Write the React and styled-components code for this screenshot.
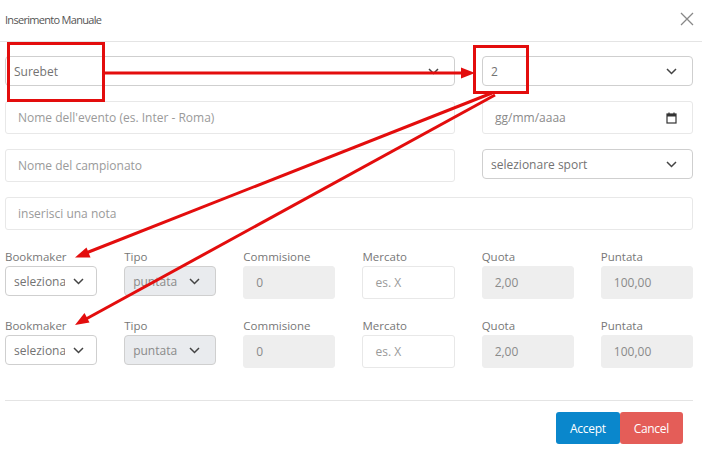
import React from 'react';
import styled, { createGlobalStyle } from 'styled-components';

const GlobalStyle = createGlobalStyle`
  html, body {
    margin: 0;
    padding: 0;
    background: #fff;
  }
  body {
    font-family: 'Open Sans', 'Noto Sans', sans-serif;
    color: #666;
  }
  * {
    box-sizing: border-box;
  }
`;

const bets = [1, 2];

const Chevron = () => (
  <svg width="11" height="7" viewBox="0 0 11 7">
    <path d="M1 1l4.5 4.5L10 1" fill="none" stroke="#444" strokeWidth="1.5" />
  </svg>
);

const CalendarIcon = () => (
  <svg width="11" height="12" viewBox="0 0 11 12">
    <rect x="1" y="2" width="9" height="9" fill="none" stroke="#333" strokeWidth="1.2" />
    <rect x="1" y="2" width="9" height="2.5" fill="#333" />
    <path d="M3 0.5v2M8 0.5v2" stroke="#333" strokeWidth="1.2" />
  </svg>
);

const CloseIcon = () => (
  <svg width="14" height="14" viewBox="0 0 14 14">
    <path d="M1 1l12 12M13 1L1 13" stroke="#888" strokeWidth="1.3" />
  </svg>
);

// red annotations drawn on top of the form
const Annotations = () => (
  <Overlay viewBox="0 0 702 455">
    <g fill="none" stroke="#e30d0d" strokeWidth="3">
      <rect x="8.5" y="43.5" width="95" height="57" />
      <rect x="474.5" y="46.5" width="53" height="46" />
      <path d="M104 73H462" />
      <path d="M492 93L86 253" />
      <path d="M495 95L86 319" />
    </g>
    <g fill="#e30d0d">
      <polygon points="475,73 461,67.5 461,78.5" />
      <polygon points="75,257.5 86.5,247.5 90.5,257.5" />
      <polygon points="75,325 84.5,313 89.5,322.5" />
    </g>
  </Overlay>
);

const App = () => {
  return (
    <>
      <GlobalStyle />
      <Modal>
        <Header>
          <Title>Inserimento Manuale</Title>
          <CloseButton>
            <CloseIcon />
          </CloseButton>
        </Header>
        <Body>
          <TopGrid>
            <Select>
              <SelectText>Surebet</SelectText>
              <Chevron />
            </Select>
            <Select>
              <SelectText>2</SelectText>
              <Chevron />
            </Select>
            <Input placeholder="Nome dell'evento (es. Inter - Roma)" />
            <DateBox>
              <span>gg/mm/aaaa</span>
              <CalendarIcon />
            </DateBox>
            <Input placeholder="Nome del campionato" />
            <Select>
              <SelectText>selezionare sport</SelectText>
              <Chevron />
            </Select>
            <Input $wide placeholder="inserisci una nota" />
          </TopGrid>

          {bets.map((b) => (
            <BetRow key={b}>
              <Field>
                <Label>Bookmaker</Label>
                <Select $small>
                  <SelectText>selezionare bookmaker</SelectText>
                  <Chevron />
                </Select>
              </Field>
              <Field>
                <Label>Tipo</Label>
                <Select $disabled>
                  <SelectText>puntata</SelectText>
                  <Chevron />
                </Select>
              </Field>
              <Field>
                <Label>Commisione</Label>
                <Input disabled value="0" readOnly />
              </Field>
              <Field>
                <Label>Mercato</Label>
                <Input placeholder="es. X" />
              </Field>
              <Field>
                <Label>Quota</Label>
                <Input disabled value="2,00" readOnly />
              </Field>
              <Field>
                <Label>Puntata</Label>
                <Input disabled value="100,00" readOnly />
              </Field>
            </BetRow>
          ))}
        </Body>
        <Footer>
          <Button $color="#0a87cc">Accept</Button>
          <Button $color="#e45d58">Cancel</Button>
        </Footer>
        <Annotations />
      </Modal>
    </>
  );
};

const Modal = styled.div`
  position: relative;
  width: 702px;
  height: 455px;
  background: #fff;
`;

const Header = styled.div`
  display: flex;
  align-items: center;
  justify-content: space-between;
  height: 42px;
  padding: 0 8px 2px 5px;
  border-bottom: 1px solid #e4e4e4;
`;

const Title = styled.div`
  font-size: 11px;
  letter-spacing: -0.7px;
  color: #555;
`;

const CloseButton = styled.div`
  display: flex;
  margin-top: -2px;
`;

const Body = styled.div`
  padding: 14px 9px 0 5px;
`;

const TopGrid = styled.div`
  display: grid;
  grid-template-columns: minmax(0, 1fr) 211px;
  column-gap: 27px;
  row-gap: 15px;
  align-items: start;
`;

const Select = styled.div`
  display: flex;
  align-items: center;
  justify-content: space-between;
  min-width: 0;
  height: 30px;
  padding: 0 ${(p) => (p.$small ? '12px' : '15px')} 0 8px;
  border: 1px solid #cfcfcf;
  border-radius: 4px;
  background: ${(p) => (p.$disabled ? '#e9ebee' : '#fff')};
  font-size: 12px;
  color: ${(p) => (p.$disabled ? '#8a8a8a' : '#737373')};
  gap: 8px;
`;

const SelectText = styled.span`
  flex: 1;
  min-width: 0;
  white-space: nowrap;
  overflow: hidden;
`;

const Input = styled.input`
  grid-column: ${(p) => (p.$wide ? '1 / -1' : 'auto')};
  width: 100%;
  min-width: 0;
  height: 33px;
  padding: 0 12px;
  border: 1px solid #e8e8e8;
  border-radius: 3px;
  font-family: inherit;
  font-size: 12px;
  color: #888;
  background: #fff;
  outline: none;

  &::placeholder {
    color: #9a9a9a;
  }

  &:disabled {
    background: #eeeeee;
    border-color: #eeeeee;
    color: #8a8a8a;
  }
`;

const DateBox = styled.div`
  display: flex;
  align-items: center;
  justify-content: space-between;
  height: 33px;
  padding: 0 15px 0 12px;
  border: 1px solid #e8e8e8;
  border-radius: 3px;
  font-size: 12px;
  color: #8a8a8a;
`;

const BetRow = styled.div`
  display: grid;
  grid-template-columns: repeat(6, minmax(0, 1fr));
  column-gap: 27px;
  margin-top: 18px;
  align-items: start;

  & + & {
    margin-top: 18px;
  }
`;

const Field = styled.div`
  display: flex;
  flex-direction: column;
  min-width: 0;
`;

const Label = styled.div`
  height: 18px;
  line-height: 18px;
  font-size: 11.5px;
  color: #777;
`;

const Footer = styled.div`
  display: flex;
  justify-content: flex-end;
  margin: 32px 9px 0 5px;
  padding: 11px 10px 0 0;
  border-top: 1px solid #e4e4e4;
`;

const Button = styled.button`
  height: 32px;
  padding: 0 14px;
  border: none;
  border-radius: 3px;
  background: ${(p) => p.$color};
  color: #fff;
  font-family: inherit;
  font-size: 12px;
  letter-spacing: -0.3px;
  cursor: pointer;
`;

const Overlay = styled.svg`
  position: absolute;
  top: 0;
  left: 0;
  width: 702px;
  height: 455px;
  pointer-events: none;
`;

export default App;
